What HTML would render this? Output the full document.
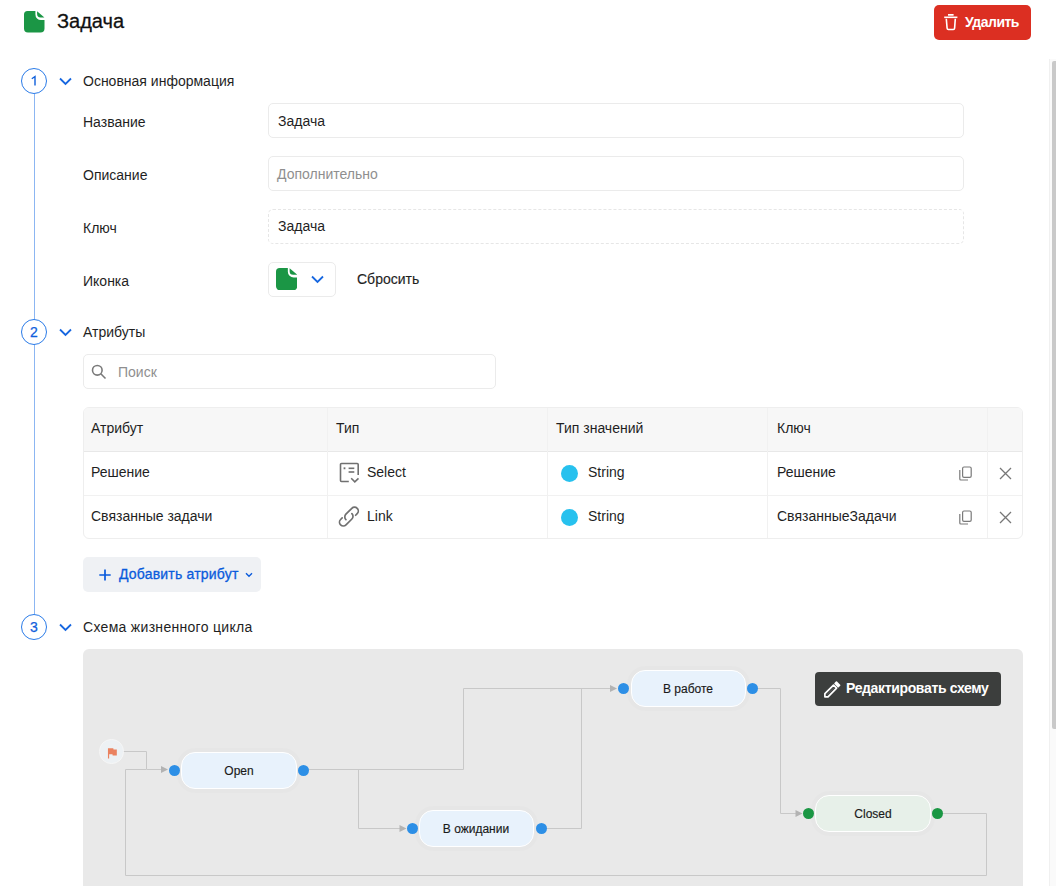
<!DOCTYPE html>
<html><head><meta charset="utf-8">
<style>
*{box-sizing:border-box;margin:0;padding:0}
html,body{width:1056px;height:886px;overflow:hidden;background:#fff}
body{position:relative;font-family:"Liberation Sans",sans-serif;color:#1f1f1f;font-size:14px}
.a{position:absolute;white-space:nowrap}
.t14{font-size:14px;line-height:16px;margin-top:1px}
.circ{position:absolute;width:26px;height:26px;border:1.3px solid #2a7be8;border-radius:50%;background:#fff;color:#0f60dc;font-size:14px;line-height:24px;text-align:center;-webkit-text-stroke:0.25px #0f60dc}
.chev{position:absolute}
.inp{position:absolute;border:1px solid #ebebeb;border-radius:5px;background:#fff}
.dash{border:1px dashed #e6e6e6 !important}
.tbl{position:absolute;left:83px;top:407px;width:940px;height:132px;border:1px solid #eeeeee;border-radius:6px;overflow:hidden}
.hdr{position:absolute;left:0;top:0;width:100%;height:44px;background:#f7f7f7;border-bottom:1px solid #e8e8e8}
.row2b{position:absolute;left:0;top:88px;width:100%;height:1px;background:#f1f1f1}
.vl{position:absolute;top:0;width:1px;height:100%;background:#f1f1f1}
.node{position:absolute;height:37px;border:1.5px solid #fff;border-radius:14px;background:#e8f2fc;font-size:12px;line-height:36px;text-align:center;color:#1a1a1a;-webkit-text-stroke:0.15px #1a1a1a;box-shadow:0 0 0 4px rgba(0,0,0,0.012)}
.dot{position:absolute;width:11px;height:11px;border-radius:50%;background:#2d8fe6}
</style></head>
<body>
<!-- header -->
<svg class="a" style="left:24px;top:11.3px" width="20.5" height="21.5" viewBox="0 0 20.5 21.5"><path d="M3.5 0 H11.4 V3.5 A5.6 5.6 0 0 0 17 9.1 H20.5 V17.5 A4 4 0 0 1 16.5 21.5 H4 A4 4 0 0 1 0 17.5 V3.5 A3.5 3.5 0 0 1 3.5 0 Z" fill="#1b9645"/><path d="M13.1 0.3 L20.4 6.5 H16.5 A3.4 3.4 0 0 1 13.1 3.1 Z" fill="#1b9645"/></svg>
<div class="a" style="left:57px;top:9px;font-size:20px;line-height:24px;color:#111;-webkit-text-stroke:0.3px #111">Задача</div>

<div class="a" style="left:934px;top:5px;width:97px;height:35px;background:#dc2f22;border-radius:5px"></div>
<svg class="a" style="left:944px;top:13px" width="14" height="18" viewBox="0 0 14 18" fill="none" stroke="#fff" stroke-width="1.6">
  <path d="M0.2 4.3 H13.4"/><rect x="4" y="1" width="5.6" height="1.7" fill="#fff" stroke="none"/><path d="M2.3 5.8 L3.1 15.3 A1.3 1.3 0 0 0 4.4 16.5 H9.3 A1.3 1.3 0 0 0 10.6 15.3 L11.3 5.8"/>
</svg>
<div class="a" style="left:965px;top:14px;font-size:14px;line-height:16px;font-weight:700;color:#fff;letter-spacing:-0.5px">Удалить</div>

<!-- scrollbar -->
<div class="a" style="left:1049px;top:59px;width:7px;height:827px;background:#fafafa;border-left:1px solid #f0f0f0"></div>
<div class="a" style="left:1051.5px;top:61px;width:4.5px;height:668px;background:#c9c9c9;border-radius:2px 0 0 2px"></div>

<!-- timeline line -->
<div class="a" style="left:34px;top:94px;width:1px;height:520px;background:#8cb6f2"></div>

<!-- section 1 -->
<div class="circ" style="left:21px;top:68px"></div>
<svg class="a" style="left:21px;top:68px" width="26" height="26" viewBox="0 0 26 26"><path d="M10.8 10.8 L14 8.5 V17.5" fill="none" stroke="#0f60dc" stroke-width="1.4" stroke-linejoin="miter"/></svg>
<svg class="chev" style="left:59px;top:77px" width="13" height="9" viewBox="0 0 13 9"><path d="M1 1.5 L6.5 6.9 L12 1.5" fill="none" stroke="#1767e0" stroke-width="1.8"/></svg>
<div class="a t14" style="left:83px;top:72px">Основная информация</div>

<div class="a t14" style="left:83px;top:113px">Название</div>
<div class="inp" style="left:268px;top:103px;width:696px;height:35px"></div>
<div class="a t14" style="left:278px;top:112px">Задача</div>

<div class="a t14" style="left:83px;top:166px">Описание</div>
<div class="inp" style="left:268px;top:156px;width:696px;height:35px"></div>
<div class="a t14" style="left:277px;top:165px;color:#8f8f8f">Дополнительно</div>

<div class="a t14" style="left:83px;top:219px">Ключ</div>
<div class="inp dash" style="left:268px;top:209px;width:696px;height:35px"></div>
<div class="a t14" style="left:278px;top:217px">Задача</div>

<div class="a t14" style="left:83px;top:272px">Иконка</div>
<div class="inp" style="left:268px;top:262px;width:68px;height:35px"></div>
<svg class="a" style="left:275.8px;top:267.6px" width="21.3" height="22.4" viewBox="0 0 20.5 21.5"><path d="M3.5 0 H11.4 V3.5 A5.6 5.6 0 0 0 17 9.1 H20.5 V17.5 A4 4 0 0 1 16.5 21.5 H4 A4 4 0 0 1 0 17.5 V3.5 A3.5 3.5 0 0 1 3.5 0 Z" fill="#1b9645"/><path d="M13.1 0.3 L20.4 6.5 H16.5 A3.4 3.4 0 0 1 13.1 3.1 Z" fill="#1b9645"/></svg>
<svg class="chev" style="left:311px;top:275px" width="13" height="9" viewBox="0 0 13 9"><path d="M1 1.5 L6.5 6.9 L12 1.5" fill="none" stroke="#1767e0" stroke-width="1.8"/></svg>
<div class="a t14" style="left:357px;top:269.5px;-webkit-text-stroke:0.15px #1f1f1f">Сбросить</div>

<!-- section 2 -->
<div class="circ" style="left:21px;top:319px">2</div>
<svg class="chev" style="left:59px;top:328px" width="13" height="9" viewBox="0 0 13 9"><path d="M1 1.5 L6.5 6.9 L12 1.5" fill="none" stroke="#1767e0" stroke-width="1.8"/></svg>
<div class="a t14" style="left:83px;top:323px">Атрибуты</div>

<div class="inp" style="left:83px;top:354px;width:413px;height:35px"></div>
<svg class="a" style="left:91px;top:364px" width="16" height="16" viewBox="0 0 16 16" fill="none" stroke="#7a7a7a" stroke-width="1.6">
  <circle cx="6.3" cy="6.3" r="4.8"/><path d="M9.8 9.8 L14.5 14.5"/>
</svg>
<div class="a t14" style="left:118px;top:363px;color:#8f8f8f">Поиск</div>

<div class="tbl">
  <div class="hdr"></div>
  <div class="row2b" style="top:87px"></div>
  <div class="vl" style="left:243px"></div>
  <div class="vl" style="left:463px"></div>
  <div class="vl" style="left:683px"></div>
  <div class="vl" style="left:903px"></div>
</div>
<div class="a t14" style="left:91px;top:419px">Атрибут</div>
<div class="a t14" style="left:336px;top:419px">Тип</div>
<div class="a t14" style="left:556px;top:419px">Тип значений</div>
<div class="a t14" style="left:777px;top:419px">Ключ</div>

<div class="a t14" style="left:91px;top:463px">Решение</div>
<svg class="a" style="left:339px;top:462px" width="21" height="22" viewBox="0 0 21 22" fill="none" stroke="#707070" stroke-width="1.6">
  <path d="M9.8 19.5 H2.5 A1 1 0 0 1 1.5 18.5 V2.5 A1 1 0 0 1 2.5 1.5 H18.2 A1 1 0 0 1 19.2 2.5 V13"/>
  <path d="M4.6 6.3 H6.4" stroke-width="1.9"/><path d="M9.6 6.3 H15.3"/><path d="M9.6 10 H15.3"/><path d="M12.2 16.3 L15.8 19.8 L19.5 16.3"/>
</svg>
<div class="a t14" style="left:367px;top:463px">Select</div>
<div class="a" style="left:561px;top:464.5px;width:17px;height:17px;border-radius:50%;background:#27c1ee"></div>
<div class="a t14" style="left:588px;top:463px">String</div>
<div class="a t14" style="left:777px;top:463px">Решение</div>
<svg class="a" style="left:958px;top:466px" width="15" height="15" viewBox="0 0 15 15" fill="none" stroke="#7a7a7a" stroke-width="1.2">
  <rect x="4.6" y="1" width="8.6" height="10.4" rx="1.4"/><path d="M1.8 4 V13 A1 1 0 0 0 2.8 14 H10"/>
</svg>
<svg class="a" style="left:999px;top:467px" width="13" height="13" viewBox="0 0 13 13" stroke="#777" stroke-width="1.3"><path d="M1 1 L12 12 M12 1 L1 12"/></svg>

<div class="a t14" style="left:91px;top:507px">Связанные задачи</div>
<svg class="a" style="left:336px;top:504px" width="26" height="26" viewBox="0 0 26 26" fill="none" stroke="#707070" stroke-width="1.7" stroke-linecap="round">
  <path d="M9.91 15.59 A3.8 3.8 0 0 1 9.91 10.21 L15.81 4.31 A3.8 3.8 0 0 1 21.19 9.69 L19.63 11.25"/><path d="M15.89 9.61 A3.8 3.8 0 0 1 15.89 14.99 L9.99 20.89 A3.8 3.8 0 0 1 4.61 15.51 L6.17 13.95"/>
</svg>
<div class="a t14" style="left:367px;top:507px">Link</div>
<div class="a" style="left:561px;top:508.5px;width:17px;height:17px;border-radius:50%;background:#27c1ee"></div>
<div class="a t14" style="left:588px;top:507px">String</div>
<div class="a t14" style="left:777px;top:507px">СвязанныеЗадачи</div>
<svg class="a" style="left:958px;top:510px" width="15" height="15" viewBox="0 0 15 15" fill="none" stroke="#7a7a7a" stroke-width="1.2">
  <rect x="4.6" y="1" width="8.6" height="10.4" rx="1.4"/><path d="M1.8 4 V13 A1 1 0 0 0 2.8 14 H10"/>
</svg>
<svg class="a" style="left:999px;top:511px" width="13" height="13" viewBox="0 0 13 13" stroke="#777" stroke-width="1.3"><path d="M1 1 L12 12 M12 1 L1 12"/></svg>

<div class="a" style="left:83px;top:557px;width:178px;height:35px;background:#eff1f4;border-radius:5px"></div>
<svg class="a" style="left:98.8px;top:568.6px" width="12" height="12" viewBox="0 0 12 12" stroke="#0a5bdc" stroke-width="1.7"><path d="M6 0.4 V11.4 M0.3 6 H11.7"/></svg>
<div class="a t14" style="left:119px;top:565px;color:#0a5bdc;letter-spacing:0.2px;-webkit-text-stroke:0.3px #0a5bdc">Добавить атрибут</div>
<svg class="a" style="left:245px;top:572px" width="8" height="6" viewBox="0 0 8 6"><path d="M1 1.2 L4 4.2 L7 1.2" fill="none" stroke="#0a5bdc" stroke-width="1.4"/></svg>

<!-- section 3 -->
<div class="circ" style="left:21px;top:614px">3</div>
<svg class="chev" style="left:59px;top:623px" width="13" height="9" viewBox="0 0 13 9"><path d="M1 1.5 L6.5 6.9 L12 1.5" fill="none" stroke="#1767e0" stroke-width="1.8"/></svg>
<div class="a t14" style="left:83px;top:618px;letter-spacing:0.3px">Схема жизненного цикла</div>

<div class="a" style="left:83px;top:649px;width:940px;height:260px;background:#e9e9e9;border-radius:6px"></div>

<svg class="a" style="left:83px;top:649px" width="940" height="237" viewBox="83 649 940 237" fill="none" stroke="#c8c8c8" stroke-width="1">
  <path d="M123 751.5 H146.5 V769.5 H162"/>
  <path d="M125.5 875.5 V769.5 H146"/>
  <path d="M303 769.5 H463.5 V688.5 H611"/>
  <path d="M358.5 769.5 V828.5 H400"/>
  <path d="M541 828.5 H581.5 V688.5"/>
  <path d="M752 688.5 H780.5 V813.5 H796"/>
  <path d="M937 813.5 H986.5 V875.5 H125.5"/>
  <g fill="#b3b3b3" stroke="none">
    <path d="M161 766 L168 769.5 L161 773 Z"/>
    <path d="M399.5 825 L406.5 828.5 L399.5 832 Z"/>
    <path d="M610 685 L617 688.5 L610 692 Z"/>
    <path d="M795.5 810 L802.5 813.5 L795.5 817 Z"/>
  </g>
</svg>

<div class="a" style="left:99px;top:739.3px;width:24.5px;height:24.5px;border-radius:50%;background:#edf1f4;border:1.6px solid #f6f6f6"></div>
<svg class="a" style="left:105.2px;top:745.6px" width="14.2" height="14.2" viewBox="0 0 24 24"><path d="M14.4 6L14 4H5v17h2v-7h5.6l.4 2h7V6z" fill="#ea8260"/></svg>

<div class="node" style="left:181px;top:752px;width:116px">Open</div>
<div class="dot" style="left:169px;top:764.5px"></div>
<div class="dot" style="left:298px;top:764.5px"></div>

<div class="node" style="left:418.5px;top:809.5px;width:115px">В ожидании</div>
<div class="dot" style="left:406.5px;top:822.5px"></div>
<div class="dot" style="left:535.5px;top:822.5px"></div>

<div class="node" style="left:630.5px;top:670px;width:115px">В работе</div>
<div class="dot" style="left:618px;top:683px"></div>
<div class="dot" style="left:747px;top:683px"></div>

<div class="node" style="left:815px;top:795.3px;width:116px;background:#e7f0e9">Closed</div>
<div class="dot" style="left:802.5px;top:808px;background:#1b9744"></div>
<div class="dot" style="left:931.5px;top:808px;background:#1b9744"></div>

<div class="a" style="left:815px;top:671.5px;width:186px;height:34px;background:#3c3e3d;border-radius:4px"></div>
<svg class="a" style="left:818px;top:674px" width="28" height="28" viewBox="0 0 28 28">
  <g transform="translate(6.6 23.1) rotate(-45)" fill="none" stroke="#fff" stroke-width="1.7" stroke-linejoin="round">
    <path d="M14.8 -2.2 H2.6 L0.4 0 L2.6 2.2 H14.8 Z"/><path d="M3.5 0 H13.5" stroke-width="0.6" stroke="#777"/><rect x="16.2" y="-3.05" width="3.6" height="6.1" rx="0.8" fill="#fff" stroke="none"/>
  </g>
</svg>
<div class="a" style="left:846px;top:680px;font-size:14px;line-height:16px;font-weight:700;color:#fff;letter-spacing:-0.35px">Редактировать схему</div>

</body></html>
